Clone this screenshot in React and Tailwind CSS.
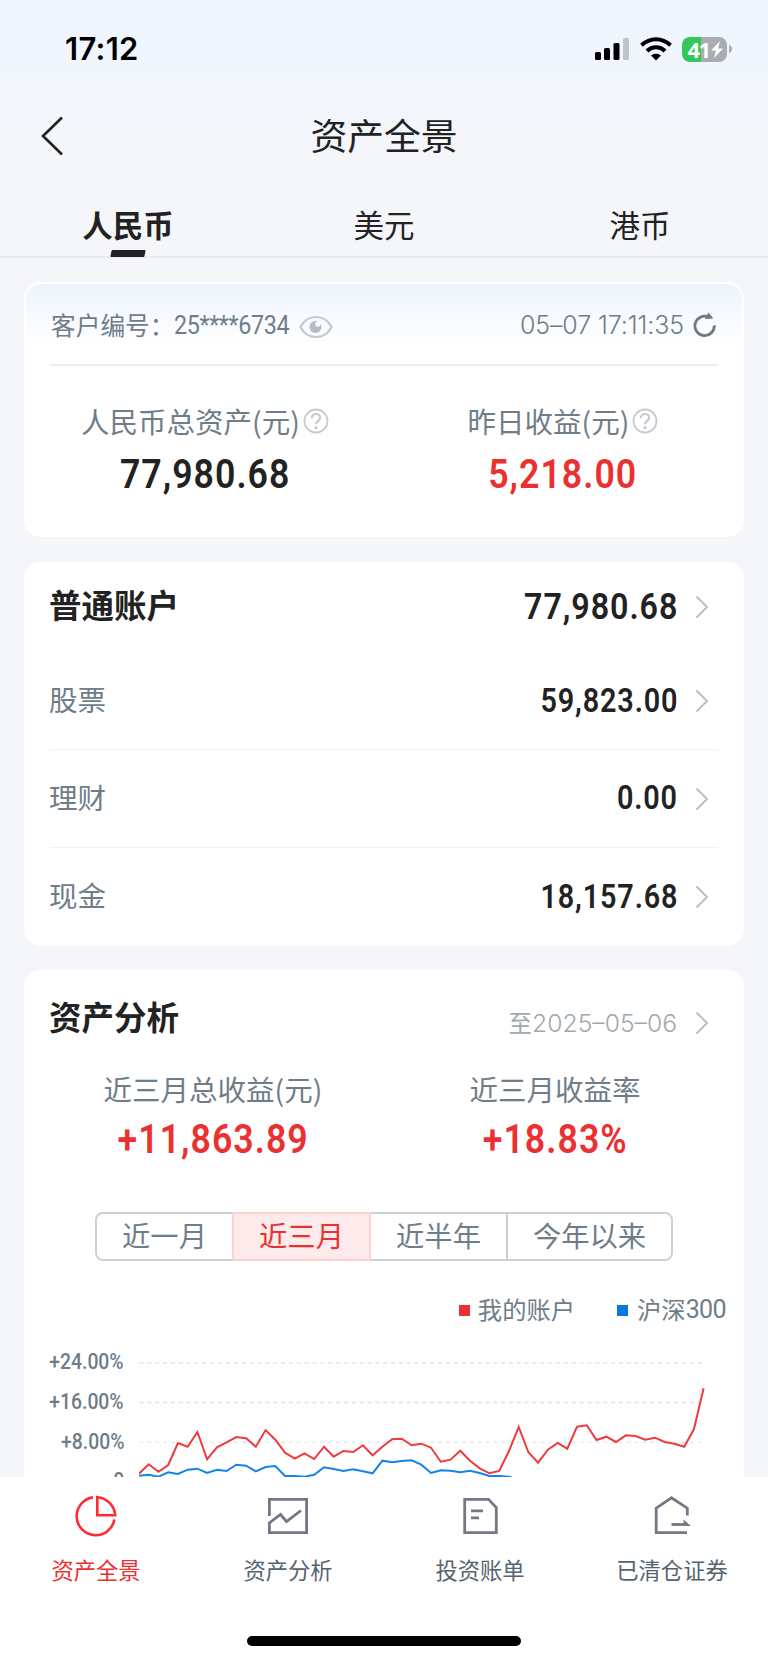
import clsx from 'clsx';

// ─── Data ─────────────────────────────────────────────────────────────────────

const CURRENCIES = ['人民币', '美元', '港币'];

const ACCOUNT_ROWS = [
  { label: '股票', value: '59,823.00', height: 'h-[96px]' },
  { label: '理财', value: '0.00', height: 'h-[98px]' },
  { label: '现金', value: '18,157.68', height: 'h-[99px]' },
];

const PERIODS = [
  { label: '近一月', width: 'w-[137px]' },
  { label: '近三月', width: 'w-[139px]' },
  { label: '近半年', width: 'w-[135px]' },
  { label: '今年以来', width: 'w-[167px]' },
];

const Y_LABELS = ['+24.00%', '+16.00%', '+8.00%', '0'];

// plotted heights, three units per pixel, measured from the top of the chart
const MY_ACCOUNT = [
  431, 403, 425, 405, 339, 350, 306, 388, 352, 337, 321, 325, 350, 300, 329, 368, 386, 370, 387, 350,
  380, 363, 366, 346, 376, 350, 328, 326, 346, 341, 353, 395, 389, 362, 392, 415, 430, 423, 364, 291,
  367, 398, 359, 339, 356, 290, 286, 330, 320, 336, 316, 318, 329, 323, 336, 341, 350, 298, 175,
];

const CSI_300 = [
  437, 434, 440, 427, 432, 419, 416, 429, 419, 423, 404, 407, 424, 411, 408, 438, 438, 440, 434, 412,
  417, 423, 418, 424, 430, 392, 397, 393, 391, 404, 429, 421, 422, 427, 422, 429, 438, 438, 440, 450,
];

const toPoints = (values) =>
  values.map((v, i) => `${(i * 9.735).toFixed(1)},${(v / 3).toFixed(1)}`).join(' ');

// ─── Icons ────────────────────────────────────────────────────────────────────

const Chevron = () => (
  <svg className="h-[24px] w-[14px] shrink-0" viewBox="0 0 14 24" fill="none" stroke="#b9c0c9" strokeWidth="2">
    <path d="M1.5 1.5 12 12 1.5 22.5" />
  </svg>
);

const HelpIcon = () => (
  <svg className="ml-[3px] h-[26px] w-[26px] shrink-0" viewBox="0 0 26 26" fill="none" stroke="#c5cad0" strokeWidth="1.8">
    <circle cx="13" cy="13" r="11.5" />
    <path d="M8.8 10.2c0-2.5 1.8-4.2 4.2-4.2s4.2 1.6 4.2 3.8c0 3-4.2 3.3-4.2 6.5" strokeWidth="2.2" />
    <circle cx="13" cy="19.6" r="1.6" fill="#c5cad0" stroke="none" />
  </svg>
);

const EyeIcon = () => (
  <svg className="h-[24px] w-[34px]" viewBox="0 0 34 24" fill="none">
    <path
      d="M1.500 12C5 5 10.500 2 17 2s12 3 15.500 10C29 19 23.500 22 17 22S5 19 1.500 12Z"
      stroke="#c3c9d1"
      strokeWidth="2.2"
    />
    <circle cx="16.5" cy="12" r="6" fill="#b5bcc5" />
    <circle cx="18.8" cy="9" r="2.6" fill="#fff" />
  </svg>
);

const RefreshIcon = () => (
  <svg className="mb-[2px] h-[25px] w-[24px]" viewBox="0 0 24 25" fill="none">
    <path d="M21.3 13.3A9.7 9.7 0 1 1 15.5 5" stroke="#6c7984" strokeWidth="2.8" />
    <path d="M15.5.5 20.300 6.500 12 7Z" fill="#6c7984" />
  </svg>
);

const StatusIcons = () => (
  <div className="flex items-center">
    <svg className="h-[24px] w-[34px]" viewBox="0 0 34 24">
      <rect x="0" y="15" width="6" height="8" rx="1.5" />
      <rect x="9" y="11" width="6" height="12" rx="1.5" />
      <rect x="18.5" y="6" width="6" height="17" rx="1.5" />
      <rect x="28" y="1" width="6" height="22" rx="1.5" fill="#c1c5cb" />
    </svg>
    <svg className="ml-[11px] h-[24px] w-[32px]" viewBox="0 0 32 24" fill="none" stroke="#000" strokeWidth="4">
      <path d="M1.5 8.3C10 .2 22 .2 30.5 8.3" />
      <path d="M7 14C12 9.1 20 9.1 25 14" />
      <path d="M16 23.5 11 18.6C13.8 16 18.2 16 21 18.6Z" fill="#000" stroke="none" />
    </svg>
    <div className="ml-[10px] flex h-[25px] w-[45px] items-center justify-center rounded-[8px] bg-[linear-gradient(90deg,#34c759_19px,#a9acb3_19px)] pl-[1px] text-white">
      <span className="font-['Noto_Sans'] text-[22px] leading-[25px] font-bold tracking-[-1.5px]">41</span>
      <svg className="ml-[1px] h-[17px] w-[12px]" viewBox="0 0 12 17" fill="#fff">
        <path d="M9 0 0 9.5h5L3 17l9-9.5H7Z" />
      </svg>
    </div>
    <svg className="ml-[2px] h-[8px] w-[3px]" viewBox="0 0 3 8" fill="#a9acb3">
      <path d="M0 0c4 1 4 7 0 8Z" />
    </svg>
  </div>
);

const PieIcon = () => (
  <svg className="h-[42px] w-[42px]" viewBox="0 0 42 42" fill="none" stroke="#ff2a32" strokeWidth="2.6">
    <path d="M18 2.4A19 19 0 1 0 39.4 24.5" />
    <path d="M22.3 2.2V20.200H40.2C39.5 10.5 32 3 22.3 2.2Z" />
  </svg>
);

const TrendIcon = () => (
  <svg className="h-[42px] w-[42px]" viewBox="0 0 42 42" fill="none" stroke="#757784" strokeWidth="2.8">
    <path d="M2.4 21V4.4H39.6V37.6H2.4V28L13.5 19.5 19.500 26.5 34 15.5" />
  </svg>
);

const BillIcon = () => (
  <svg className="h-[42px] w-[42px]" viewBox="0 0 42 42" fill="none" stroke="#757784" strokeWidth="2.8">
    <path d="M5.7 4.4H29.5L37.300 12.5V37.6H5.7Z" />
    <path d="M12 15.8H24M12 22.8H20" />
  </svg>
);

const ClearedIcon = () => (
  <svg className="h-[42px] w-[42px]" viewBox="0 0 42 42" fill="none" stroke="#757784" strokeWidth="2.8">
    <path d="M36.3 20.5V13.200L20.500 2.8 5.200 13.2V37.6H36" />
    <path d="M20.5 29.5H37" />
    <path d="M32.500 24.500 40 30.900H32.500Z" fill="#757784" stroke="none" />
  </svg>
);

const NAV_ITEMS = [
  { label: '资产全景', Icon: PieIcon, active: true },
  { label: '资产分析', Icon: TrendIcon },
  { label: '投资账单', Icon: BillIcon },
  { label: '已清仓证券', Icon: ClearedIcon },
];

// ─── Sub-components ───────────────────────────────────────────────────────────

const Num = ({ children, className }) => (
  <span className={clsx("inline-block font-['Roboto'] whitespace-nowrap", className)}>{children}</span>
);

const Metric = ({ label, value, help, color }) => (
  <div className="flex flex-col items-center">
    <div className={clsx('flex items-center text-[28.5px] text-[#6f7d89]', help ? 'h-[43px] pb-[3px]' : 'h-[40px]')}>
      <span>{label}</span>
      {help && <HelpIcon />}
    </div>
    <Num className={clsx('scale-x-[0.86] text-[41.5px] leading-[60px] font-semibold tracking-[1.2px]', color)}>
      {value}
    </Num>
  </div>
);

const Header = () => (
  <>
    <div className="flex h-[86px] items-center justify-between pt-[12px] pr-[36px] pl-[65px]">
      <span className="font-['Inter'] text-[31px] font-semibold tracking-[0.3px] text-black">17:12</span>
      <StatusIcons />
    </div>
    <div className="grid h-[100px] grid-cols-[120px_1fr_120px] items-center">
      <svg className="ml-[41px] h-[40px] w-[22px]" viewBox="0 0 22 40" fill="none" stroke="#222" strokeWidth="2.6">
        <path d="M21 1.5 2 20 21 38.5" />
      </svg>
      <h1 className="pb-[3px] text-center text-[36.8px] text-[#222]">资产全景</h1>
    </div>
    <div className="grid h-[72px] grid-cols-3 border-b-2 border-[#e9ebee]">
      {CURRENCIES.map((name, i) => (
        <div key={name} className="flex flex-col items-center text-[30.5px] text-[#222]">
          <span className={clsx('mt-[8px] h-[56px] leading-[60px]', i === 0 && 'font-semibold')}>{name}</span>
          {i === 0 && <span className="h-[7px] w-[34px] -skew-x-12 rounded-[1px] bg-[#222]" />}
        </div>
      ))}
    </div>
  </>
);

const SummaryCard = () => (
  <section className="mt-[24px] h-[255px] rounded-[17px] border-2 border-white bg-[linear-gradient(#eef4fe_0px,#fff_62px)] px-[25px]">
    <div className="flex h-[82px] items-center justify-between border-b-2 border-[#edeeef] pt-[3px] text-[24.7px] text-[#6f7d89]">
      <div className="flex items-center">
        <span className="pb-[1px]">客户编号：</span>
        <Num className="w-[116px] origin-left scale-x-[0.915] text-[25.5px] tracking-[-0.4px]">25****6734</Num>
        <span className="ml-[9px] pt-[2px]"><EyeIcon /></span>
      </div>
      <div className="flex items-center">
        <span className="font-['Inter'] text-[25px] font-[350] tracking-[-0.1px]">05–07 17:11:35</span>
        <span className="ml-[9px]"><RefreshIcon /></span>
      </div>
    </div>
    <div className="-mx-[25px] grid grid-cols-2 pt-[35px]">
      <Metric label="人民币总资产(元)" value="77,980.68" help color="text-[#222]" />
      <Metric label="昨日收益(元)" value="5,218.00" help color="text-[#ec3031]" />
    </div>
  </section>
);

const AccountCard = () => (
  <section className="mt-[25px] h-[384px] rounded-[17px] bg-white px-[26px]">
    <div className="flex h-[91px] items-center justify-between pr-[9px] pb-[2px]">
      <h2 className="-ml-[1px] pb-[4px] text-[32.5px] font-bold text-[#222]">普通账户</h2>
      <div className="flex items-center gap-[17px]">
        <Num className="origin-right scale-x-[0.86] text-[37.5px] font-semibold tracking-[1.1px] text-[#222]">
          77,980.68
        </Num>
        <Chevron />
      </div>
    </div>
    {ACCOUNT_ROWS.map((row, i) => (
      <div
        key={row.label}
        className={clsx('flex items-center justify-between pr-[9px]', row.height, i > 0 && 'border-t border-[#f0f1f2]')}
      >
        <span className="-ml-[1px] pb-[3px] text-[28.5px] text-[#6f7d89]">{row.label}</span>
        <div className="flex items-center gap-[17px]">
          <Num className="origin-right scale-x-[0.86] text-[33.5px] font-semibold tracking-[1px] text-[#222]">
            {row.value}
          </Num>
          <Chevron />
        </div>
      </div>
    ))}
  </section>
);

const TrendChart = () => (
  <div className="flex h-[147px] pl-[20px]">
    <div className="flex w-[80px] flex-col items-end pt-[12px]">
      {Y_LABELS.map((label) => (
        <Num key={label} className="h-[39.8px] origin-right scale-x-[0.9] text-[21.5px] leading-[40px] font-medium text-[#6f7d89]">
          {label}
        </Num>
      ))}
    </div>
    <svg className="ml-[15px] h-[147px] w-[568px]" viewBox="0 0 568 147" fill="none">
      {[32.8, 72.5, 112.3].map((y) => (
        <path key={y} d={`M0.5 ${y}H565`} stroke="#e9eaeb" strokeWidth="1.8" strokeDasharray="4 3.86" />
      ))}
      <polyline points={toPoints(CSI_300)} stroke="#1683e6" strokeWidth="2" />
      <polyline points={toPoints(MY_ACCOUNT)} stroke="#ee3b3d" strokeWidth="2" />
    </svg>
  </div>
);

const AnalysisCard = () => (
  <section className="mt-[24px] h-[600px] rounded-t-[17px] bg-white">
    <div className="flex h-[96px] items-center justify-between pr-[35px] pl-[25px]">
      <h2 className="pb-[4px] text-[32.5px] font-bold text-[#222]">资产分析</h2>
      <div className="flex items-center gap-[18px] pt-[11px] text-[#a0a8b0]">
        <span className="text-[23.5px]">
          至<span className="font-['Inter'] text-[24.7px] font-[350]">2025–05–06</span>
        </span>
        <Chevron />
      </div>
    </div>
    <div className="grid grid-cols-2 px-[18px] pt-[3px]">
      <Metric label="近三月总收益(元)" value="+11,863.89" color="text-[#ec3031]" />
      <Metric label="近三月收益率" value="+18.83%" color="text-[#ec3031]" />
    </div>
    <div className="mt-[43px] ml-[71px] flex h-[49px] w-[579px] text-[28.3px] leading-[42px] text-[#6f7d89]">
      {PERIODS.map((period, i) => (
        <div
          key={period.label}
          className={clsx(
            'border-y-2 text-center',
            period.width,
            i === 1 ? 'border-x-2 border-[#fbd3d4] bg-[#fdebeb] text-[#ec3031]' : 'border-[#cdd1d6]',
            i === 0 && 'rounded-l-[8px] border-l-2',
            i === 3 && 'rounded-r-[8px] border-x-2'
          )}
        >
          {period.label}
        </div>
      ))}
    </div>
    <div className="mt-[31px] flex h-[38px] items-center justify-end pr-[18px] pb-[4px] text-[24.3px] text-[#6f7d89]">
      <span className="mt-[2px] mr-[8px] h-[11px] w-[11px] bg-[#ec3031]" />
      我的账户
      <span className="mt-[2px] mr-[9px] ml-[42px] h-[11px] w-[11px] bg-[#0a78e0]" />
      沪深<Num className="mt-[2px] text-[25px] tracking-[-0.6px]">300</Num>
    </div>
    <TrendChart />
  </section>
);

const BottomNav = () => (
  <footer className="flex h-[186px] flex-col items-center bg-white">
    <nav className="grid w-full grid-cols-4 pt-[18px]">
      {NAV_ITEMS.map(({ label, Icon, active }) => (
        <div
          key={label}
          className={clsx('flex flex-col items-center text-[22.3px]', active ? 'text-[#ec3031]' : 'text-[#55636f]')}
        >
          <Icon />
          <span className="mt-[14px] leading-[36px]">{label}</span>
        </div>
      ))}
    </nav>
    <div className="mt-[49px] h-[10px] w-[274px] rounded-full bg-black" />
  </footer>
);

// ─── Page ─────────────────────────────────────────────────────────────────────

const App = () => (
  <div className="flex h-[1663px] w-[768px] flex-col overflow-hidden bg-[#f4f6fa] font-['Noto_Sans_CJK_SC',sans-serif]">
    <main className="h-[1477px] shrink-0 overflow-hidden bg-[linear-gradient(#edf5fe_0px,#f1f6fe_66px,#f4f6fa_150px)]">
      <Header />
      <div className="px-[24px]">
        <SummaryCard />
        <AccountCard />
        <AnalysisCard />
      </div>
    </main>
    <BottomNav />
  </div>
);

export default App;
